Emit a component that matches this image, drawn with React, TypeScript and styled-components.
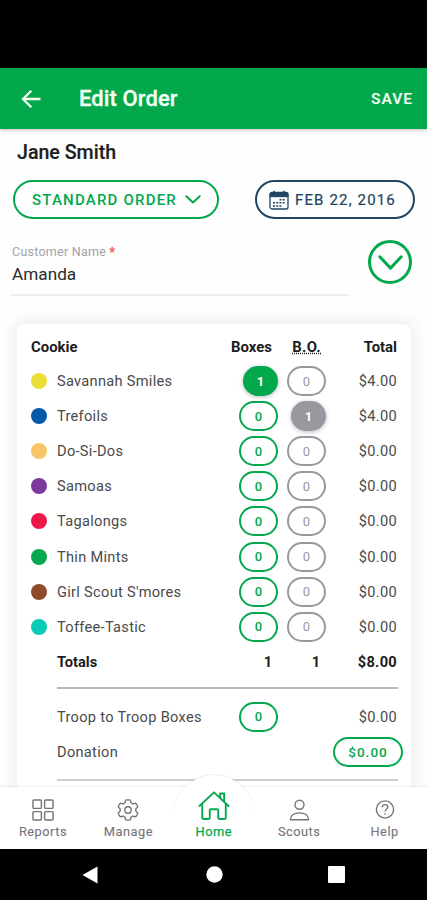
import React from "react";
import styled, { createGlobalStyle, css } from "styled-components";

const GREEN = "#03a84c";
const NAVY = "#1f4660";
const GREY = "#98999f";

const GlobalStyle = createGlobalStyle`
  *, *::before, *::after { box-sizing: border-box; }
  body { margin: 0; background: #fff; font-family: Roboto, "Liberation Sans", sans-serif; }
  button { font-family: inherit; padding: 0; margin: 0; background: none; border: 0; }
`;

const Screen = styled.div`
  width: 427px;
  height: 900px;
  display: flex;
  flex-direction: column;
  overflow: hidden;
  background: #fefefe;
`;

const StatusBar = styled.div`
  flex: 0 0 68px;
  background: #000;
`;

const AppBar = styled.header`
  flex: 0 0 61px;
  display: flex;
  align-items: center;
  padding: 0 14px 0 21px;
  background: ${GREEN};
  color: #f4fff2;
  box-shadow: 0 1px 4px rgba(60, 40, 70, 0.3);
  svg { display: block; }
`;

const BarTitle = styled.h1`
  flex: 1;
  margin: 0 0 0 38px;
  font-size: 22px;
  line-height: 26px;
  font-weight: 500;
  letter-spacing: 0.1px;
  -webkit-text-stroke: 0.3px currentColor;
`;

const SaveButton = styled.button`
  color: inherit;
  font-size: 15.5px;
  font-weight: 600;
  letter-spacing: 1px;
`;

const Body = styled.main`
  flex: 1;
  min-height: 0;
  overflow: hidden;
  padding-top: 12px;
`;

const ScoutName = styled.h2`
  margin: 0 0 0 17px;
  font-size: 19.6px;
  line-height: 24px;
  font-weight: 500;
  color: #1e1e1e;
  -webkit-text-stroke: 0.2px currentColor;
`;

const OptionRow = styled.div`
  display: flex;
  justify-content: space-between;
  margin: 15px 12px 0 13px;
`;

const OptionPill = styled.button<{ $tone: string; $width: number; $inset: number }>`
  width: ${(p) => p.$width}px;
  height: 39px;
  border: 2px solid ${(p) => p.$tone};
  border-radius: 20px;
  display: flex;
  align-items: center;
  padding-left: ${(p) => p.$inset}px;
  color: ${(p) => p.$tone};
  font-size: 15px;
  text-align: left;
  white-space: nowrap;
`;

const OrderType = styled.span`
  width: 153px;
  font-weight: 500;
  letter-spacing: 1.2px;
`;

const OrderDate = styled.span`
  letter-spacing: 1.15px;
  margin-left: 6px;
  padding-top: 1px;
  -webkit-text-stroke: 0.2px currentColor;
`;

const CustomerRow = styled.div`
  display: flex;
  justify-content: space-between;
  align-items: flex-start;
  margin: 21px 15px 0 11px;
`;

const Field = styled.label`
  width: 337px;
  height: 56px;
  border-bottom: 2px solid #ececec;
  display: block;
  padding: 4px 0 0 1px;
`;

const FieldLabel = styled.span`
  display: block;
  font-size: 12.5px;
  line-height: 16px;
  letter-spacing: 0.25px;
  color: #a2a2a6;
  i { font-style: normal; color: #f2635f; -webkit-text-stroke: 0.4px currentColor; }
`;

const FieldValue = styled.span`
  display: block;
  margin-top: 4px;
  font-size: 17.2px;
  line-height: 20px;
  color: #2b2b2b;
`;

const Expand = styled.button`
  width: 44px;
  height: 44px;
  border: 3px solid ${GREEN};
  border-radius: 50%;
  display: grid;
  place-items: center;
`;

const Card = styled.section`
  margin: 28px 16px 0 17px;
  height: 520px;
  padding: 6px 14px 0 14px;
  border-radius: 8px;
  background: #fff;
  box-shadow: 0 0 14px 4px rgba(0, 0, 0, 0.065);
`;

const Line = styled.div<{ $head?: boolean; $bold?: boolean }>`
  display: grid;
  grid-template-columns: 26px 173px 48px 48px 1fr;
  align-items: center;
  height: ${(p) => (p.$head ? 33.5 : 35.1)}px;
  font-size: ${(p) => (p.$head ? 14.9 : 14.6)}px;
  color: ${(p) => (p.$head || p.$bold ? "#1c1c1c" : "#4a4a4a")};
  font-weight: ${(p) => (p.$head || p.$bold ? 700 : 400)};
`;

const Dot = styled.i<{ $color: string }>`
  width: 16px;
  height: 16px;
  border-radius: 50%;
  background: ${(p) => p.$color};
`;

const CookieName = styled.span`
  grid-column: 2;
  letter-spacing: 0.3px;
  white-space: nowrap;
`;

const HeadCell = styled.span<{ $right?: number; $span?: boolean }>`
  ${(p) => p.$span && css`grid-column: span 2;`}
  justify-self: ${(p) => (p.$right === undefined ? "start" : "end")};
  margin-right: ${(p) => p.$right ?? 0}px;
  white-space: nowrap;
`;

const Abbr = styled.span`
  letter-spacing: 0.3px;
  text-decoration: underline dotted;
  text-underline-offset: 1px;
`;

const Amount = styled.span`
  grid-column: 5;
  justify-self: end;
  letter-spacing: 0.3px;
`;

const CountPill = styled.button<{ $tone: string; $filled?: boolean; $col: number }>`
  grid-column: ${(p) => p.$col};
  justify-self: end;
  width: ${(p) => (p.$filled ? 35 : 39)}px;
  height: 30px;
  border: 2px solid ${(p) => p.$tone};
  border-radius: 15px;
  background: ${(p) => (p.$filled ? p.$tone : "#fff")};
  color: ${(p) => (p.$filled ? "#fff" : p.$tone)};
  font-size: 13px;
  font-weight: ${(p) => (p.$filled ? 700 : p.$tone === GREEN ? 500 : 400)};
  box-shadow: ${(p) => (p.$filled ? "0 1px 4px rgba(50, 50, 90, 0.35)" : "none")};
`;

const DonationPill = styled.button`
  grid-column: 4 / 6;
  justify-self: end;
  margin-right: -6px;
  width: 70px;
  height: 30px;
  border: 2px solid ${GREEN};
  border-radius: 15px;
  color: ${GREEN};
  font-size: 13.6px;
  font-weight: 500;
  letter-spacing: 1px;
`;

const Rule = styled.hr<{ $light?: boolean }>`
  border: 0;
  height: 2px;
  margin: ${(p) => (p.$light ? "9px -1px 0 26px" : "8px -1px 10px 26px")};
  background: ${(p) => (p.$light ? "#cfcfcf" : "#b9b9b9")};
`;

const TabBar = styled.nav`
  flex: 0 0 62px;
  position: relative;
  display: grid;
  grid-template-columns: repeat(5, 1fr);
  background: #fff;
  box-shadow: 0 -1px 1px rgba(0, 0, 0, 0.06);
  &::before {
    content: "";
    position: absolute;
    left: 173px;
    top: -12px;
    width: 82px;
    height: 82px;
    border-radius: 50%;
    background: #fff;
    box-shadow: 0 -1px 1px rgba(0, 0, 0, 0.07);
    clip-path: inset(-3px -3px 40px -3px);
  }
`;

const Tab = styled.a<{ $active?: boolean }>`
  position: relative;
  display: flex;
  flex-direction: column;
  align-items: center;
  justify-content: flex-end;
  padding: 0 0 9px 0.6px;
  color: ${(p) => (p.$active ? GREEN : "#75757a")};
  font-size: 12.8px;
  line-height: 16px;
  letter-spacing: 0.5px;
  -webkit-text-stroke: ${(p) => (p.$active ? 0.25 : 0.1)}px currentColor;
  svg { display: block; margin-bottom: 3.5px; }
`;

const SystemBar = styled.footer`
  flex: 0 0 51px;
  background: #000;
  display: grid;
  grid-template-columns: 179px 70px 1fr;
  align-items: center;
  justify-items: center;
  padding-right: 3px;
`;

const BackArrow = () => (
  <svg width="20" height="20" viewBox="0 0 20 20" fill="none" stroke="currentColor" strokeWidth="2.3">
    <path d="M19.5 10H2M10.3 1.700 2 10l8.300 8.300" />
  </svg>
);

const Chevron = ({ w, h, s }: { w: number; h: number; s: number }) => (
  <svg width={w} height={h} viewBox={`0 0 ${w} ${h}`} fill="none" stroke={GREEN} strokeWidth={s} strokeLinecap="round" strokeLinejoin="round">
    <path d={`M${s / 2 + 0.3} ${s / 2 + 0.3}L${w / 2} ${h - s / 2 - 0.4}L${w - s / 2 - 0.3} ${s / 2 + 0.3}`} />
  </svg>
);

const CalendarIcon = () => (
  <svg width="20" height="20" viewBox="0 0 20 20" fill="none" stroke={NAVY}>
    <rect x="1" y="2.5" width="18" height="16.5" rx="2" strokeWidth="1.3" />
    <path d="M1 6.7V4.5a2 2 0 0 1 2-2h14a2 2 0 0 1 2 2v2.2z" fill={NAVY} />
    <path d="M5.2 .8v3M14.8 .8v3" strokeWidth="1.5" />
    <path d="M10.5 9.7h6M4 12.8h12.5M4 16h9" strokeWidth="1.5" strokeDasharray="2 1.2" />
  </svg>
);

const GridIcon = () => (
  <svg width="22" height="22" viewBox="0 0 23 23" fill="none" stroke="currentColor" strokeWidth="1.5">
    {[1, 13.2].map((x) => [1, 13.2].map((y) => <rect key={`${x}-${y}`} x={x} y={y} width="8.8" height="8.8" rx="1" />))}
  </svg>
);

const GearIcon = () => (
  <svg width="22" height="22" viewBox="1 0 22 24" fill="none" stroke="currentColor" strokeWidth="1.5" strokeLinejoin="round">
    <path d="M10.200 1h3.600q.6 0 .8.700l.6 2.400 2.100 1.200 2.500-.7q.7-.2 1 .4l1.700 2.900q.3.600-.2 1.100L20.500 10.800v2.400l1.800 1.800q.5.500.2 1.100l-1.700 2.900q-.3.600-1 .4l-2.500-.7-2.100 1.200-.6 2.400q-.2.700-.8.700h-3.600q-.6 0-.8-.7l-.6-2.400-2.100-1.200-2.500.7q-.7.200-1-.4L1.500 16.100q-.3-.6.2-1.100l1.800-1.800v-2.400L1.700 9q-.5-.5-.2-1.100L3.200 5q.3-.6 1-.4l2.500.7 2.100-1.200.6-2.400q.2-.7.800-.7z" />
    <circle cx="12" cy="12" r="3.500" />
  </svg>
);

const HomeIcon = () => (
  <svg width="32" height="31" viewBox="0 0 34 32" fill="none" stroke="currentColor" strokeWidth="2" strokeLinejoin="round" strokeLinecap="round">
    <path d="M1.500 16.500 17 2l15.500 14.500" />
    <path d="M23.500 7.500V3.300h4.300v8.300" />
    <path d="M4.500 14.500V29q0 1.300 1.300 1.300h5.400q1.300 0 1.300-1.300v-7.700q0-1.300 1.300-1.300h6.400q1.300 0 1.300 1.300V29q0 1.300 1.300 1.300h5.400q1.300 0 1.300-1.300V14.500" />
  </svg>
);

const PersonIcon = () => (
  <svg width="21" height="22" viewBox="0 0 22 23" fill="none" stroke="currentColor" strokeWidth="1.500" strokeLinejoin="round">
    <circle cx="11" cy="6" r="4.700" />
    <path d="M1.500 21.700c0-4.500 4-7.200 9.500-7.200s9.500 2.700 9.500 7.200z" />
  </svg>
);

const HelpIcon = () => (
  <svg width="20" height="22" viewBox="0 0 20 22" fill="none" stroke="currentColor" strokeWidth="1.400">
    <circle cx="10" cy="10.500" r="8.600" />
    <path d="M7.200 8.300c.2-3.600 5.600-3.400 5.600-.2 0 2-2.700 2.200-2.700 4.400M10.100 14.200v1.500" />
  </svg>
);

type Cookie = { name: string; color: string; boxes: number; booth: number; total: string };

const cookies: Cookie[] = [
  { name: "Savannah Smiles", color: "#eadf35", boxes: 1, booth: 0, total: "$4.00" },
  { name: "Trefoils", color: "#0558aa", boxes: 0, booth: 1, total: "$4.00" },
  { name: "Do-Si-Dos", color: "#fac568", boxes: 0, booth: 0, total: "$0.00" },
  { name: "Samoas", color: "#7c3b9c", boxes: 0, booth: 0, total: "$0.00" },
  { name: "Tagalongs", color: "#ed1847", boxes: 0, booth: 0, total: "$0.00" },
  { name: "Thin Mints", color: "#07a850", boxes: 0, booth: 0, total: "$0.00" },
  { name: "Girl Scout S'mores", color: "#8f4a2c", boxes: 0, booth: 0, total: "$0.00" },
  { name: "Toffee-Tastic", color: "#06cbb9", boxes: 0, booth: 0, total: "$0.00" },
];

const tabs = [
  { label: "Reports", icon: <GridIcon /> },
  { label: "Manage", icon: <GearIcon /> },
  { label: "Home", icon: <HomeIcon />, active: true },
  { label: "Scouts", icon: <PersonIcon /> },
  { label: "Help", icon: <HelpIcon /> },
];

export default function App() {
  return (
    <>
      <GlobalStyle />
      <Screen>
        <StatusBar />
        <AppBar>
          <BackArrow />
          <BarTitle>Edit Order</BarTitle>
          <SaveButton>SAVE</SaveButton>
        </AppBar>
        <Body>
          <ScoutName>Jane Smith</ScoutName>
          <OptionRow>
            <OptionPill $tone={GREEN} $width={206} $inset={17}>
              <OrderType>STANDARD ORDER</OrderType>
              <Chevron w={16} h={9} s={2} />
            </OptionPill>
            <OptionPill $tone={NAVY} $width={160} $inset={12}>
              <CalendarIcon />
              <OrderDate>FEB 22, 2016</OrderDate>
            </OptionPill>
          </OptionRow>
          <CustomerRow>
            <Field>
              <FieldLabel>Customer Name <i>*</i></FieldLabel>
              <FieldValue>Amanda</FieldValue>
            </Field>
            <Expand><Chevron w={25} h={15} s={3} /></Expand>
          </CustomerRow>
          <Card>
            <Line $head>
              <HeadCell $span>Cookie</HeadCell>
              <HeadCell $right={6}>Boxes</HeadCell>
              <HeadCell $right={5}><Abbr>B.O.</Abbr></HeadCell>
              <HeadCell $right={0}>Total</HeadCell>
            </Line>
            {cookies.map((c) => (
              <Line key={c.name}>
                <Dot $color={c.color} />
                <CookieName>{c.name}</CookieName>
                <CountPill $tone={GREEN} $col={3} $filled={c.boxes > 0}>{c.boxes}</CountPill>
                <CountPill $tone={GREY} $col={4} $filled={c.booth > 0}>{c.booth}</CountPill>
                <Amount>{c.total}</Amount>
              </Line>
            ))}
            <Line $bold>
              <i />
              <span>Totals</span>
              <HeadCell $right={6}>1</HeadCell>
              <HeadCell $right={6}>1</HeadCell>
              <Amount>$8.00</Amount>
            </Line>
            <Rule />
            <Line>
              <CookieName>Troop to Troop Boxes</CookieName>
              <CountPill $tone={GREEN} $col={3}>0</CountPill>
              <Amount>$0.00</Amount>
            </Line>
            <Line>
              <CookieName>Donation</CookieName>
              <DonationPill>$0.00</DonationPill>
            </Line>
            <Rule $light />
          </Card>
        </Body>
        <TabBar>
          {tabs.map((t) => (
            <Tab key={t.label} $active={t.active}>
              {t.icon}
              {t.label}
            </Tab>
          ))}
        </TabBar>
        <SystemBar>
          <svg width="16" height="18" viewBox="0 0 16 18"><path d="M15.500 .5v17L.5 9z" fill="#fff" /></svg>
          <svg width="17" height="17" viewBox="0 0 17 17"><circle cx="8.500" cy="8.500" r="8.200" fill="#fff" /></svg>
          <svg width="17" height="17" viewBox="0 0 17 17"><rect width="17" height="17" rx="1" fill="#fff" /></svg>
        </SystemBar>
      </Screen>
    </>
  );
}
